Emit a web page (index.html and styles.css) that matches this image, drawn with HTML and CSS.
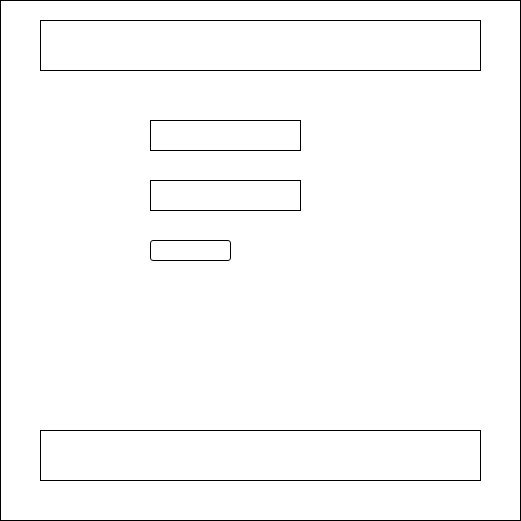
FILE: index.html
```html
<!DOCTYPE html>
<html lang="en">
<head>
  <meta charset="UTF-8">
  <meta name="viewport" content="width=device-width, initial-scale=1.0">
  <title>Wireframe</title>
  <link rel="stylesheet" href="styles.css">
</head>
<body>
  <div class="page">
    <!-- header -->
    <div class="header"></div>

    <!-- form -->
    <form class="form">
      <input class="field" type="text">
      <input class="field" type="password">
      <button class="btn" type="button"></button>
    </form>

    <!-- footer -->
    <div class="footer"></div>
  </div>
</body>
</html>
```

FILE: styles.css
```css
body {
  margin: 0;
  background: #fff;
  font-family: 'Liberation Sans', Arial, sans-serif;
}

/* outer frame */
.page {
  width: 521px;
  height: 521px;
  box-sizing: border-box;
  border: 1px solid #000;
  padding: 19px 39px 39px;
  display: flex;
  flex-direction: column;
}

.header,
.footer {
  height: 51px;
  box-sizing: border-box;
  border: 1px solid #000;
  flex-shrink: 0;
}

.footer {
  margin-top: auto;
}

.form {
  display: flex;
  flex-direction: column;
  align-items: flex-start;
  gap: 29px;
  margin: 0;
  padding: 49px 0 0 110px;
}

.field {
  width: 151px;
  height: 31px;
  box-sizing: border-box;
  border: 1px solid #000;
  border-radius: 0;
  margin: 0;
  padding: 0;
  background: #fff;
  outline: none;
}

.btn {
  width: 81px;
  height: 21px;
  box-sizing: border-box;
  border: 1px solid #000;
  border-radius: 3px;
  margin: 0;
  padding: 0;
  background: #fff;
}
```
